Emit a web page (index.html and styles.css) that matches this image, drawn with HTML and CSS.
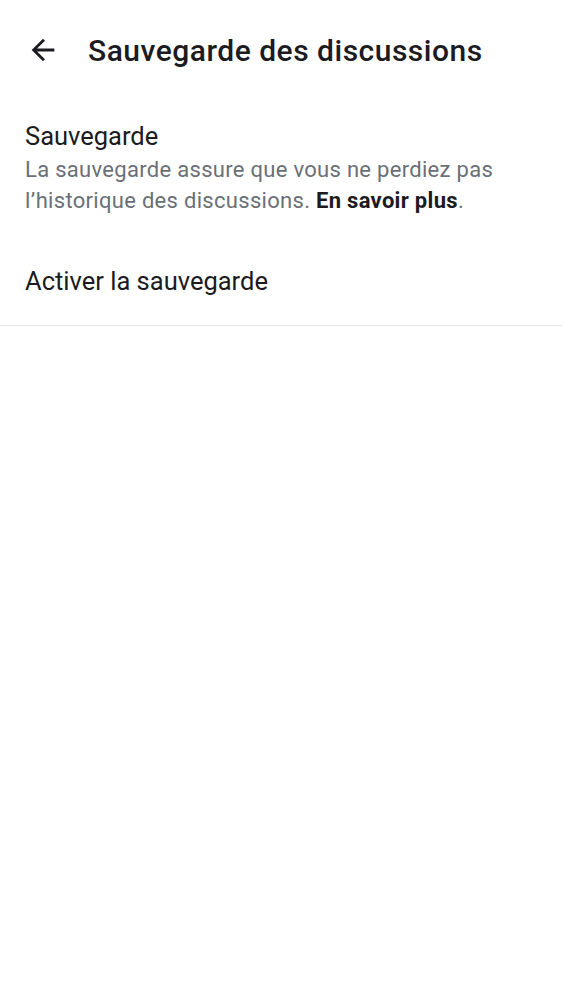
FILE: index.html
```html
<!DOCTYPE html>
<html lang="fr">
<head>
<meta charset="utf-8">
<link rel="stylesheet" href="styles.css">
</head>
<body>
<header class="topbar">
  <button class="back" aria-label="Retour">
    <svg width="34" height="34" viewBox="0 0 24 24"><path d="M20 11H7.83l5.59-5.59L12 4l-8 8 8 8 1.41-1.41L7.83 13H20v-2z" fill="#1c1b1f"/></svg>
  </button>
  <h1 class="title">Sauvegarde des discussions</h1>
</header>
<section class="info">
  <div class="info-title">Sauvegarde</div>
  <p class="info-desc">La sauvegarde assure que vous ne perdiez pas l’historique des discussions. <strong>En savoir plus</strong>.</p>
</section>
<div class="row">Activer la sauvegarde</div>
</body>
</html>
```
FILE: styles.css
```css
html, body { margin: 0; padding: 0; background: #fff; }
body { font-family: Roboto, "Noto Sans", sans-serif; color: #1c1b1f; width: 562px; }
.topbar { display: flex; align-items: center; height: 100px; padding-left: 26px; box-sizing: border-box; }
.back { border: 0; background: none; padding: 0; width: 34px; height: 34px; display: flex; margin-right: 28px; }
.title { margin: 0; font-size: 30px; font-weight: 500; letter-spacing: 0.5px; color: #1c1b1f; }
.info { padding: 20px 25px 21px; }
.info-title { font-size: 25.5px; line-height: 32px; }
.info-desc { margin: 2px 0 0; font-size: 22px; line-height: 31px; color: #6b6f76; letter-spacing: 0.3px; }
.info-desc strong { color: #1c1b1f; font-weight: 700; }
.row { padding: 0 25px; height: 89px; display: flex; align-items: center; font-size: 25.5px; border-bottom: 1px solid #e6e5ec; box-sizing: border-box; }
```
